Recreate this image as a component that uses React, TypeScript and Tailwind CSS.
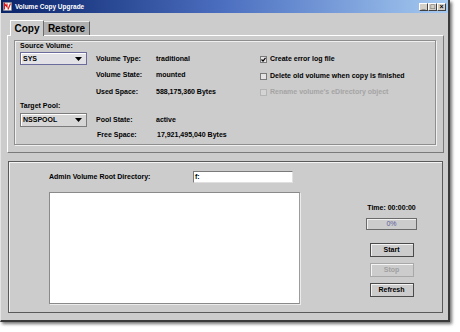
import React from "react";

const font = { fontFamily: '"Liberation Sans", Arial, sans-serif' };

function Combo({ value, focused }: { value: string; focused?: boolean }) {
  return (
    <div
      className={`flex items-center justify-between w-[67px] pl-[2px] pr-[4px] border ${
        focused ? "h-[13px] bg-[#e2e2e6] border-[#6c6c9c]" : "h-[14px] bg-[#d6d6d6] border-[#7c7c7c]"
      } shadow-[inset_1px_1px_0_#ffffff]`}
    >
      <span className="text-[7px] leading-[8px] font-bold">{value}</span>
      <svg width="7" height="4" viewBox="0 0 7 4">
        <path d="M0 0h7L3.5 4z" fill="#000" />
      </svg>
    </div>
  );
}

function Check({ label, checked, disabled }: { label: string; checked?: boolean; disabled?: boolean }) {
  return (
    <div className="flex items-center h-[8px]">
      <div
        className={`w-[7px] h-[7px] border flex items-center justify-center ${
          disabled ? "border-[#b4b4b4] bg-[#d4d4d4]" : "border-[#7a7a7a] bg-[#e4e4e4]"
        }`}
      >
        {checked && (
          <svg width="5" height="5" viewBox="0 0 5 5">
            <path d="M0.5 2.5L2 4L4.5 0.8" stroke="#000" strokeWidth="1.2" fill="none" />
          </svg>
        )}
      </div>
      <span
        className={`ml-[3px] text-[7px] leading-[8px] font-bold ${
          disabled ? "text-[#a4a4a4]" : "text-black"
        }`}
      >
        {label}
      </span>
    </div>
  );
}

function Row({ label, value, className }: { label: string; value: string; className?: string }) {
  return (
    <div className={`grid grid-cols-[60px_auto] h-[8px] text-[7px] leading-[8px] font-bold ${className ?? ""}`}>
      <span>{label}</span>
      <span>{value}</span>
    </div>
  );
}

function Btn({ label, disabled }: { label: string; disabled?: boolean }) {
  return (
    <div
      className={`w-[44px] h-[14px] flex items-center justify-center border text-[7px] leading-[8px] font-bold shadow-[inset_1px_1px_0_#f4f4f4] ${
        disabled ? "border-[#a8a8a8] text-[#a0a0a0]" : "border-[#4a4a4a] text-black"
      }`}
    >
      {label}
    </div>
  );
}

export default function App() {
  return (
    <div className="w-[460px] h-[332px] bg-white overflow-hidden text-black" style={font}>
      <div className="w-[450px] h-[322px] bg-[#cccccc] border-l border-l-[#e4e4e4] border-r-2 border-b-2 border-r-[#3a3a3a] border-b-[#3a3a3a] shadow-[2px_2px_3px_rgba(0,0,0,0.55)] flex flex-col">
        {/* title bar */}
        <div className="h-[13px] flex items-center bg-gradient-to-r from-[#0a246a] via-[#4d6fc0] to-[#a6caf0] pl-[2px] pr-[2px]">
          <svg width="9" height="9" viewBox="0 0 9 9">
            <rect x="0.5" y="0.5" width="8" height="8" fill="#ffffff" stroke="#888" strokeWidth="0.6" />
            <path d="M1.5 7.5V1.5L4 5V1.5M5 7.5L7.5 1.5" stroke="#d81818" strokeWidth="1.2" fill="none" />
          </svg>
          <span className="ml-[3px] text-[6.5px] leading-[8px] font-bold text-white">Volume Copy Upgrade</span>
          <div className="ml-auto flex">
            {["_", "□", "×"].map((g, i) => (
              <div
                key={i}
                className="w-[9px] h-[8px] bg-[#d4d0c8] border border-[#404040] border-t-white border-l-white flex items-center justify-center text-[7px] leading-[7px] font-bold text-black"
              >
                {g}
              </div>
            ))}
          </div>
        </div>

        {/* tabs */}
        <div className="mt-[7px] ml-[9px] flex items-end h-[16px] relative z-10">
          <div className="w-[34px] h-[16px] bg-[#cccccc] border-t border-l border-r border-t-white border-l-white border-r-[#6c6c6c] flex items-center justify-center text-[10px] font-bold leading-[12px]">
            Copy
          </div>
          <div className="w-[46px] h-[14px] mb-[1px] bg-[#b0b0b0] border-t border-r border-t-[#e8e8e8] border-r-[#5c5c5c] flex items-center justify-center text-[10px] font-bold leading-[12px]">
            Restore
          </div>
        </div>

        {/* tab panel */}
        <div className="-mt-[1px] ml-[6px] w-[437px] h-[118px] border border-t-white border-l-white border-r-[#7a7a7a] border-b-[#7a7a7a] pl-[6px] pt-[4px]">
          <div className="w-[422px] h-[105px] border border-[#8e8e8e] shadow-[inset_1px_1px_0_#f0f0f0,1px_1px_0_#f0f0f0] flex pl-[5px]">
            <div className="flex flex-col w-[67px] pt-[1px]">
              <span className="text-[7px] leading-[8px] font-bold">Source Volume:</span>
              <div className="mt-[2px]">
                <Combo value="SYS" focused />
              </div>
              <span className="mt-[37px] text-[7px] leading-[8px] font-bold">Target Pool:</span>
              <div className="mt-[3px]">
                <Combo value="NSSPOOL" />
              </div>
            </div>
            <div className="flex flex-col ml-[9px] w-[164px]">
              <Row className="mt-[14px]" label="Volume Type:" value="traditional" />
              <Row className="mt-[8px]" label="Volume State:" value="mounted" />
              <Row className="mt-[9px]" label="Used Space:" value="588,175,360 Bytes" />
              <Row className="mt-[20px]" label="Pool State:" value="active" />
              <Row className="mt-[7px] pl-[1px]" label="Free Space:" value="17,921,495,040 Bytes" />
            </div>
            <div className="flex flex-col">
              <div className="mt-[14px]">
                <Check label="Create error log file" checked />
              </div>
              <div className="mt-[9px]">
                <Check label="Delete old volume when copy is finished" />
              </div>
              <div className="mt-[8px]">
                <Check label="Rename volume's eDirectory object" disabled />
              </div>
            </div>
          </div>
        </div>

        {/* bottom panel */}
        <div className="mt-[8px] ml-[7px] w-[435px] h-[152px] border border-[#5a5a5a] shadow-[inset_1px_1px_0_#f4f4f4] flex flex-col pt-[9px] pl-[40px]">
          <div className="flex items-center h-[12px]">
            <span className="w-[144px] text-[7px] leading-[8px] font-bold">Admin Volume Root Directory:</span>
            <div className="w-[100px] h-[12px] bg-white border border-[#7a7a7a] border-r-[#e0e0e0] border-b-[#e0e0e0] pl-[1px] text-[7px] leading-[10px] font-bold">
              f:
            </div>
          </div>
          <div className="flex mt-[9px]">
            <div className="w-[251px] h-[112px] bg-white border border-[#8a8a8a] border-r-[#9c9c9c] shadow-[1px_1px_0_#ececec]" />
            <div className="ml-[66px] w-[51px] flex flex-col items-center">
              <span className="mt-[12px] text-[7px] leading-[8px] font-bold whitespace-nowrap">Time: 00:00:00</span>
              <div className="mt-[6px] w-[51px] h-[12px] border border-[#6a6a6a] shadow-[inset_1px_1px_0_#f0f0f0] flex items-center justify-center text-[7px] leading-[8px] text-[#5a5a9a]">
                0%
              </div>
              <div className="mt-[13px]">
                <Btn label="Start" />
              </div>
              <div className="mt-[6px]">
                <Btn label="Stop" disabled />
              </div>
              <div className="mt-[6px]">
                <Btn label="Refresh" />
              </div>
            </div>
          </div>
        </div>
      </div>
    </div>
  );
}
